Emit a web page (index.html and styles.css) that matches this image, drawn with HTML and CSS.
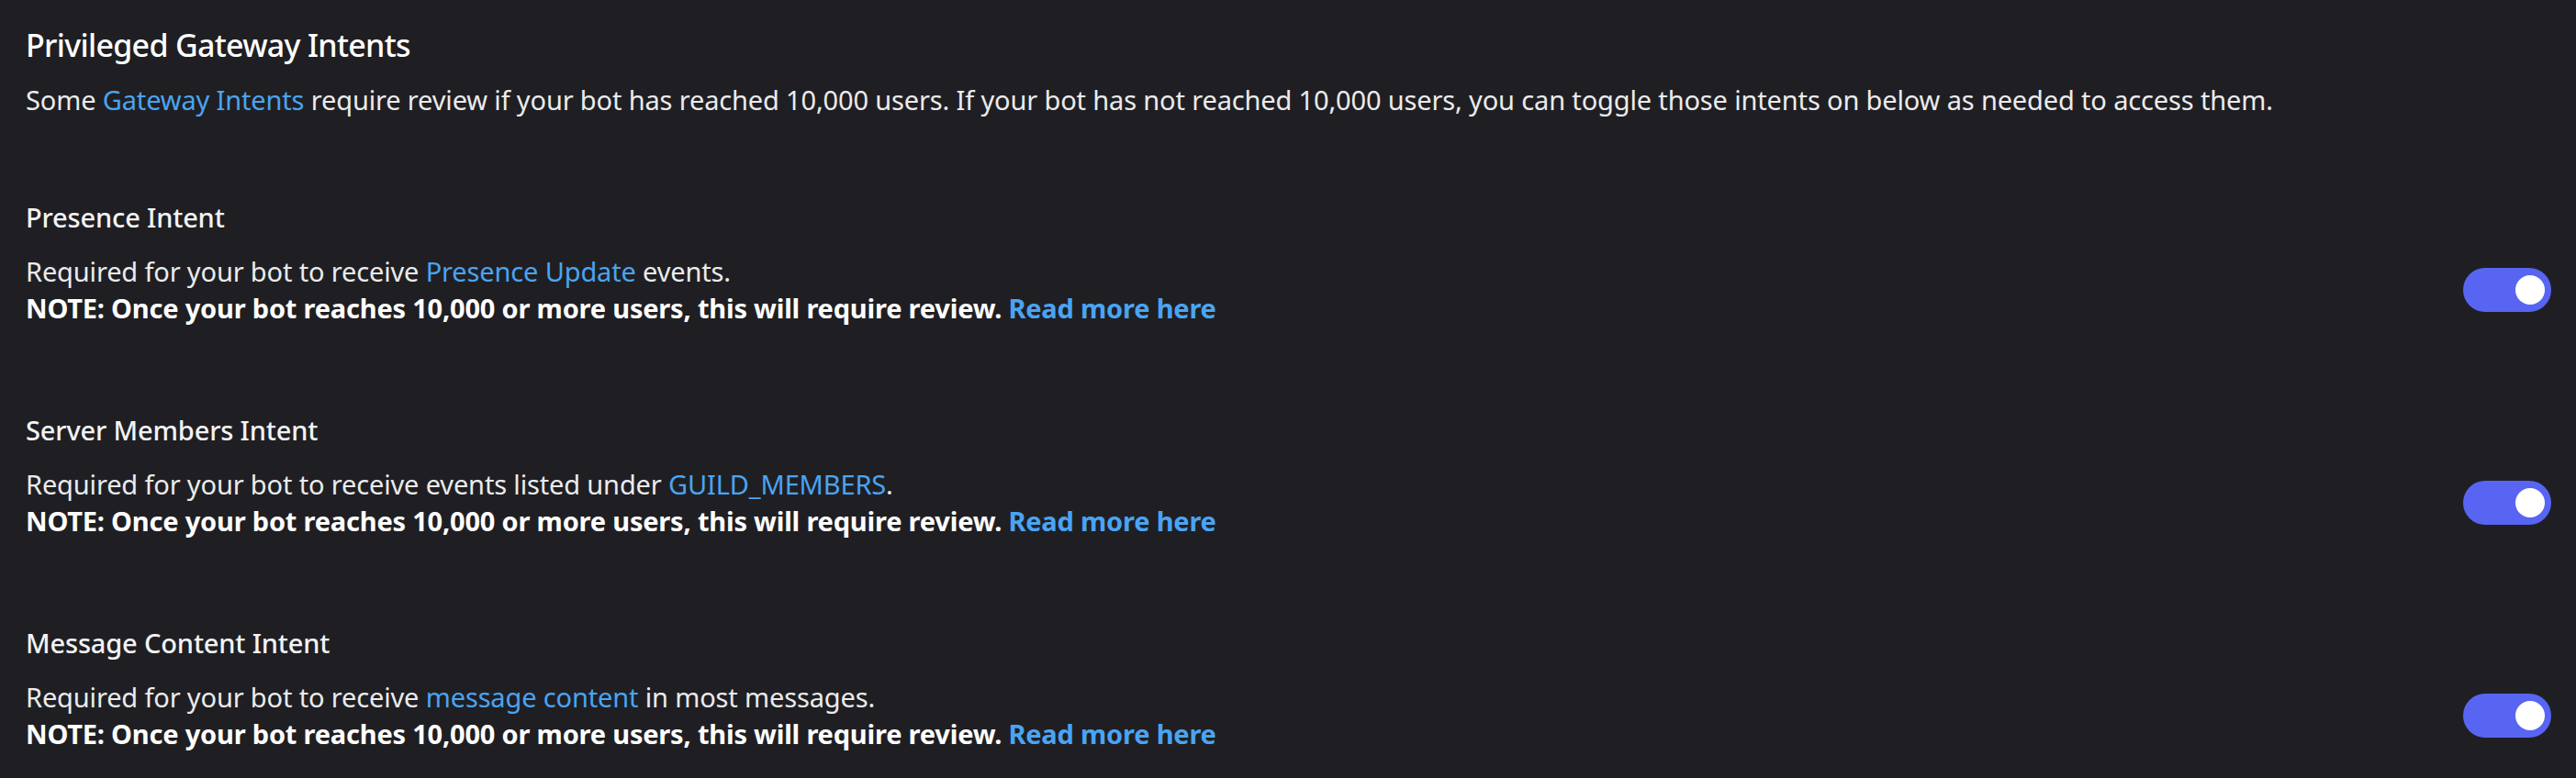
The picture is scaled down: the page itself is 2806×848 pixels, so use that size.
FILE: index.html
```html
<!DOCTYPE html>
<html>
<head>
<meta charset="utf-8">
<link rel="stylesheet" href="styles.css">
</head>
<body>
<main class="page">
  <h1 class="title">Privileged Gateway Intents</h1>
  <p class="intro">Some <a class="link">Gateway Intents</a> require review if your bot has reached 10,000 users. If your bot has not reached 10,000 users, you can toggle those intents on below as needed to access them.</p>

  <section class="intent">
    <h2 class="intent-title">Presence Intent</h2>
    <div class="intent-row">
      <div class="intent-desc">
        <div>Required for your bot to receive <a class="link">Presence Update</a> events.</div>
        <div class="note">NOTE: Once your bot reaches 10,000 or more users, this will require review. <a class="link">Read more here</a></div>
      </div>
      <div class="switch"><span class="knob"></span></div>
    </div>
  </section>

  <section class="intent">
    <h2 class="intent-title">Server Members Intent</h2>
    <div class="intent-row">
      <div class="intent-desc">
        <div>Required for your bot to receive events listed under <a class="link">GUILD_MEMBERS</a>.</div>
        <div class="note">NOTE: Once your bot reaches 10,000 or more users, this will require review. <a class="link">Read more here</a></div>
      </div>
      <div class="switch"><span class="knob"></span></div>
    </div>
  </section>

  <section class="intent">
    <h2 class="intent-title">Message Content Intent</h2>
    <div class="intent-row">
      <div class="intent-desc">
        <div>Required for your bot to receive <a class="link">message content</a> in most messages.</div>
        <div class="note">NOTE: Once your bot reaches 10,000 or more users, this will require review. <a class="link">Read more here</a></div>
      </div>
      <div class="switch"><span class="knob"></span></div>
    </div>
  </section>
</main>
</body>
</html>
```

FILE: styles.css
```css
html, body {
  margin: 0;
  padding: 0;
  background: #1f1f23;
}
body {
  font-family: "Noto Sans", "Open Sans", sans-serif;
  color: #f2f3f5;
  width: 2806px;
  height: 848px;
  overflow: hidden;
}
.page {
  padding: 25px 27px 0 28px;
}
.title {
  margin: 0;
  font-size: 34px;
  line-height: 48px;
  font-weight: 500;
  letter-spacing: -0.7px;
  color: #ffffff;
}
.intro {
  margin: 16px 0 0 0;
  font-size: 29px;
  line-height: 40px;
  letter-spacing: -0.15px;
  color: #ebebed;
}
.link {
  color: #4aa4f2;
  text-decoration: none;
}
.intent {
  margin-top: 88px;
}
.intent + .intent {
  margin-top: 93px;
}
.intent-title {
  margin: 0;
  font-size: 29px;
  line-height: 40px;
  font-weight: 500;
  letter-spacing: -0.15px;
  color: #f2f3f5;
}
.intent-row {
  margin-top: 19px;
  display: flex;
  align-items: center;
  justify-content: space-between;
}
.intent-desc {
  font-size: 29px;
  line-height: 40px;
  letter-spacing: -0.15px;
  color: #ebebed;
}
.note {
  font-weight: 700;
  letter-spacing: -0.2px;
  color: #ffffff;
}
.switch {
  width: 96px;
  height: 48px;
  border-radius: 24px;
  background: #5865f2;
  display: flex;
  align-items: center;
  justify-content: flex-end;
  padding: 0 7px;
  box-sizing: border-box;
}
.knob {
  width: 32px;
  height: 32px;
  border-radius: 50%;
  background: #ffffff;
}
```
